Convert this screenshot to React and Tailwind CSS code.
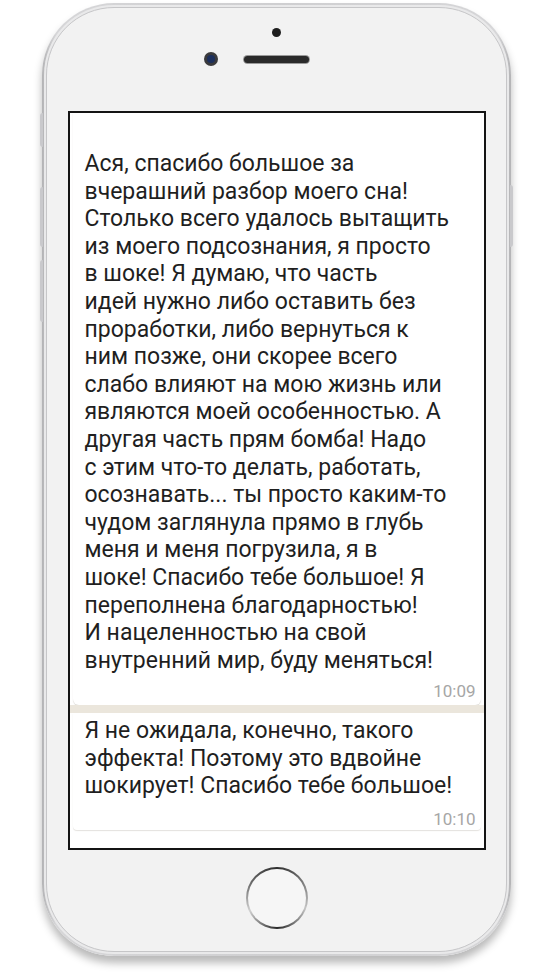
const first = [
  "Ася, спасибо большое за",
  "вчерашний разбор моего сна!",
  "Столько всего удалось вытащить",
  "из моего подсознания, я просто",
  "в шоке! Я думаю, что часть",
  "идей нужно либо оставить без",
  "проработки, либо вернуться к",
  "ним позже, они скорее всего",
  "слабо влияют на мою жизнь или",
  "являются моей особенностью. А",
  "другая часть прям бомба! Надо",
  "с этим что-то делать, работать,",
  "осознавать... ты просто каким-то",
  "чудом заглянула прямо в глубь",
  "меня и меня погрузила, я в",
  "шоке! Спасибо тебе большое! Я",
  "переполнена благодарностью!",
  "И нацеленностью на свой",
  "внутренний мир, буду меняться!",
];

const second = [
  "Я не ожидала, конечно, такого",
  "эффекта! Поэтому это вдвойне",
  "шокирует! Спасибо тебе большое!",
];

function Lines({ lines }) {
  return (
    <div className="text-[23px] leading-[27.6px] text-[#1f1f1f]">
      {lines.map((l) => (
        <div key={l} className="whitespace-nowrap">
          {l}
        </div>
      ))}
    </div>
  );
}

function Time({ children }) {
  return (
    <div className="text-right text-[17px] leading-[16px] text-[#a6a6a6]">
      {children}
    </div>
  );
}

export default function App() {
  return (
    <div
      className="w-[553px] h-[974px] bg-white pt-[3px] pl-[42px]"
      style={{ fontFamily: "Roboto, 'Noto Sans', sans-serif" }}
    >
      <div className="relative w-[469px] h-[953px]">
        {/* side buttons */}
        <div className="absolute left-[-2px] top-[110px] h-[34px] w-[3px] rounded-l-sm bg-[#c9c9cc]" />
        <div className="absolute left-[-2px] top-[184px] h-[60px] w-[3px] rounded-l-sm bg-[#c9c9cc]" />
        <div className="absolute left-[-2px] top-[257px] h-[62px] w-[3px] rounded-l-sm bg-[#c9c9cc]" />
        <div className="absolute right-[-2px] top-[182px] h-[62px] w-[3px] rounded-r-sm bg-[#c9c9cc]" />

        <div className="h-full rounded-[72px] bg-[linear-gradient(90deg,#b4b4b6,#d6d6d8_3%,#cfcfd1_50%,#d6d6d8_97%,#b4b4b6)] p-[2px] shadow-[0_7px_9px_rgba(0,0,0,0.28)]">
          <div className="h-full rounded-[70px] bg-[#e9e9ea] p-[2px]">
            <div className="flex h-full flex-col items-center rounded-[68px] border border-[#c6c6c8] bg-[#f2f2f2]">
              {/* top */}
              <div className="flex h-[103px] flex-col items-center">
                <div className="mt-[20px] h-[9px] w-[9px] rounded-full bg-[#1e1e1e]" />
                <div className="mt-[15px] flex items-center gap-[26px]">
                  <div className="flex h-[14px] w-[14px] items-center justify-center rounded-full bg-[#3a3a3c]">
                    <div className="h-[8px] w-[8px] rounded-full bg-[#1c2f5c]" />
                  </div>
                  <div className="h-[7px] w-[65px] rounded-full bg-[#2a2a2a] shadow-[0_0_0_1px_#9a9a9a]" />
                  <div className="w-[14px]" />
                </div>
              </div>

              {/* screen */}
              <div className="flex h-[739px] w-[418px] flex-col border-2 border-[#141414] bg-white">
                <div className="mx-[3px] rounded-b-[6px] bg-white pt-[37px] pb-[6px] pl-[12px] pr-[5px] shadow-[0_1px_1px_rgba(120,110,90,0.25)]">
                  <Lines lines={first} />
                  <div className="mt-[9px]">
                    <Time>10:09</Time>
                  </div>
                </div>
                <div className="h-[8px] bg-[#ebe6dc]" />
                <div className="mx-[3px] rounded-b-[4px] bg-white pt-[4px] pb-[3px] pl-[12px] pr-[5px] shadow-[0_1px_1px_rgba(120,110,90,0.2)]">
                  <Lines lines={second} />
                  <div className="mt-[11px]">
                    <Time>10:10</Time>
                  </div>
                </div>
              </div>

              {/* home button */}
              <div className="mt-[17px] flex h-[62px] w-[62px] items-center justify-center rounded-full bg-[conic-gradient(from_0deg,#2e2e2e,#8a8a8a_70deg,#c4c4c4_110deg,#2a2a2a_180deg,#d0d0d0_245deg,#6a6a6a_300deg,#2e2e2e)]">
                <div className="h-[58px] w-[58px] rounded-full bg-[#f6f6f6]" />
              </div>
            </div>
          </div>
        </div>
      </div>
    </div>
  );
}
